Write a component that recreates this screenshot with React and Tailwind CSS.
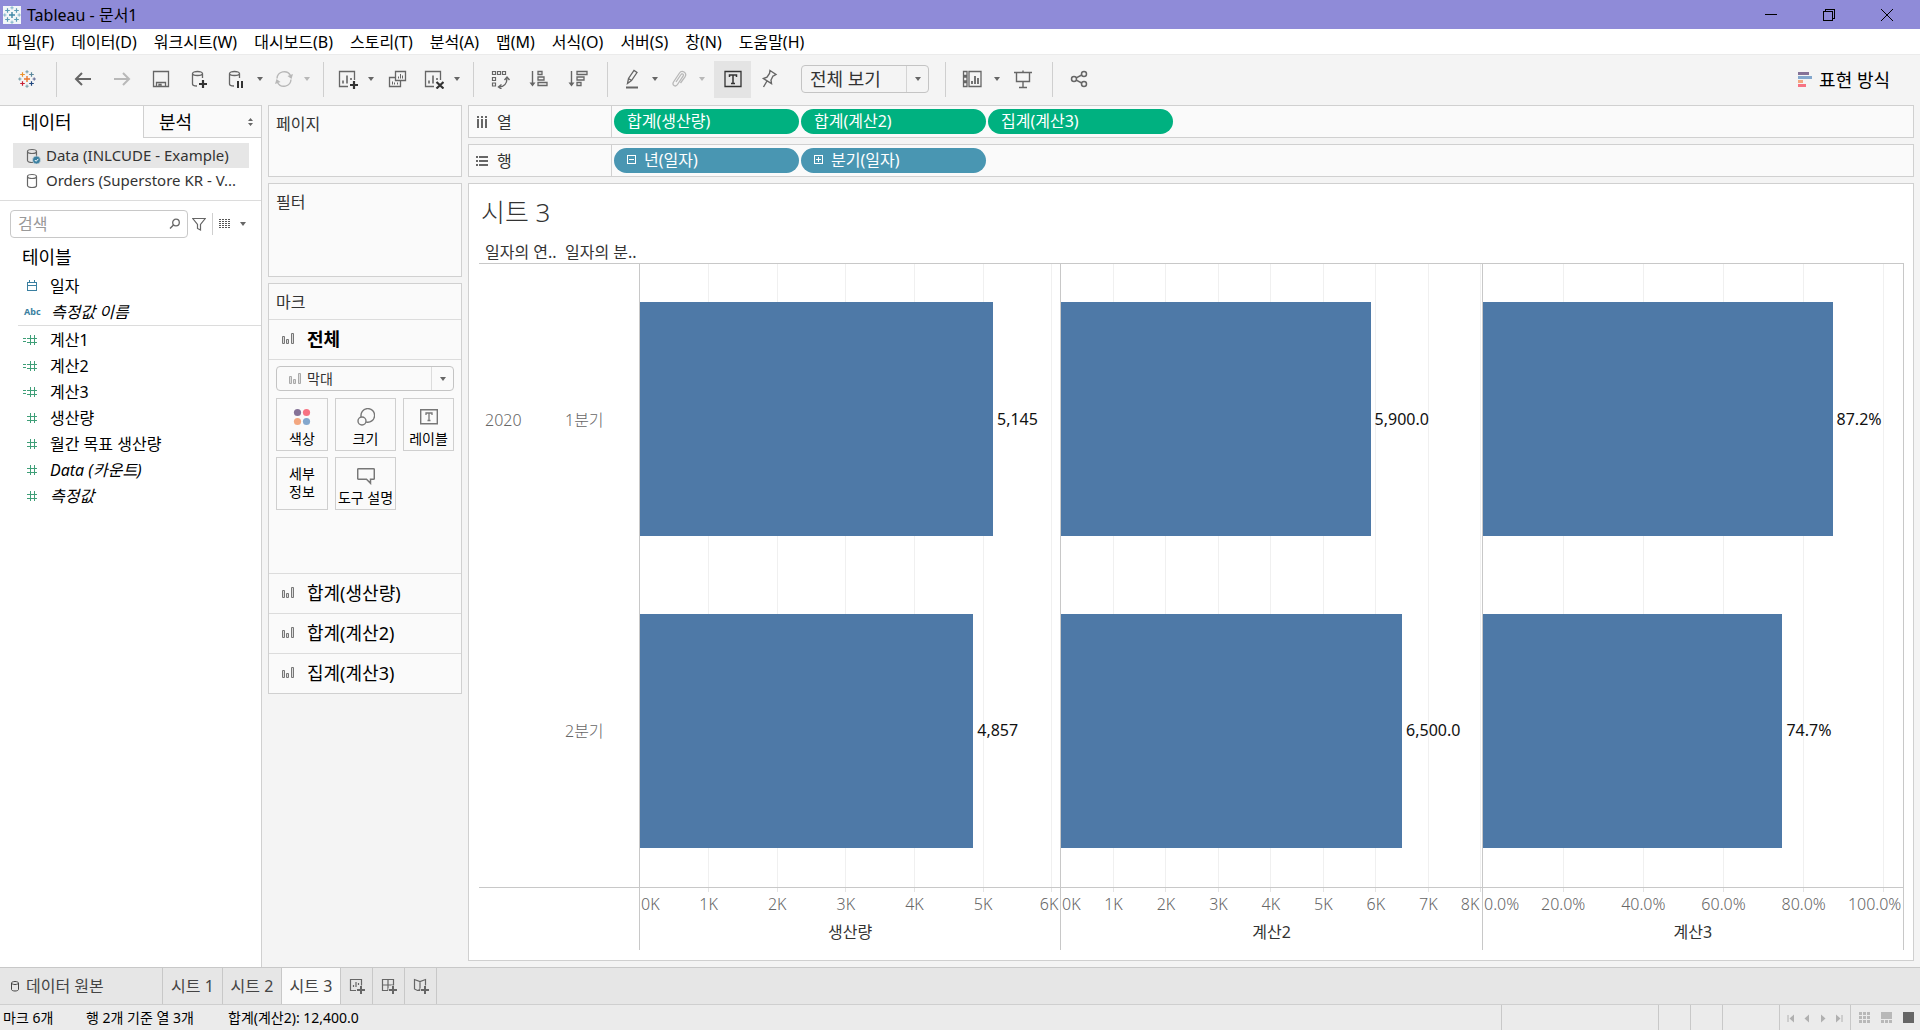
import React from 'react';

const menus = [
  '파일(F)',
  '데이터(D)',
  '워크시트(W)',
  '대시보드(B)',
  '스토리(T)',
  '분석(A)',
  '맵(M)',
  '서식(O)',
  '서버(S)',
  '창(N)',
  '도움말(H)'
];

const measures = [
  { name: '계산1', calc: true },
  { name: '계산2', calc: true },
  { name: '계산3', calc: true },
  { name: '생산량' },
  { name: '월간 목표 생산량' },
  { name: 'Data (카운트)', generated: true },
  { name: '측정값', generated: true }
];

const panes = [
  {
    title: '생산량',
    max: 6.126,
    ticks: [0, 1, 2, 3, 4, 5, 6].map(v => ({ value: v, label: `${v}K` })),
    bars: [
      { value: 5.145, label: '5,145' },
      { value: 4.857, label: '4,857' }
    ]
  },
  {
    title: '계산2',
    max: 8.01,
    ticks: [0, 1, 2, 3, 4, 5, 6, 7, 8].map(v => ({ value: v, label: `${v}K` })),
    bars: [
      { value: 5.9, label: '5,900.0' },
      { value: 6.5, label: '6,500.0' }
    ]
  },
  {
    title: '계산3',
    max: 104.85,
    ticks: [0, 20, 40, 60, 80, 100].map(v => ({ value: v, label: `${v}.0%` })),
    bars: [
      { value: 87.2, label: '87.2%' },
      { value: 74.7, label: '74.7%' }
    ]
  }
];

/* ---------- icons ---------- */

const Svg = ({ size = 20, className = '', children }) => (
  <svg
    width={size}
    height={size}
    viewBox={`0 0 ${size} ${size}`}
    fill="none"
    stroke="currentColor"
    className={`shrink-0 ${className}`}
    aria-hidden="true"
  >
    {children}
  </svg>
);

const Caret = ({ className = '' }) => (
  <svg width="6" height="4" viewBox="0 0 6 4" className={`shrink-0 ${className}`} aria-hidden="true">
    <path d="M0 0h6L3 4z" fill="currentColor" />
  </svg>
);

const Plus = ({ x, y, r, color, w = 1 }) => (
  <path d={`M${x - r} ${y}h${r * 2}M${x} ${y - r}v${r * 2}`} stroke={color} strokeWidth={w} />
);

const TableauMark = ({ mono }) => (
  <Svg size={18}>
    <Plus x={9} y={9} r={3} w={1.4} color={mono ? '#3f87a6' : '#e8762c'} />
    <Plus x={4.5} y={4.5} r={2.3} w={1.2} color={mono ? '#5b9bb5' : '#eb9129'} />
    <Plus x={13.5} y={4.5} r={2.3} w={1.2} color={mono ? '#5b9bb5' : '#59879b'} />
    <Plus x={4.5} y={13.5} r={2.3} w={1.2} color={mono ? '#5b9bb5' : '#c72035'} />
    <Plus x={13.5} y={13.5} r={2.3} w={1.2} color={mono ? '#5b9bb5' : '#1f457e'} />
    <Plus x={9} y={1.8} r={1.6} color={mono ? '#7fb2c8' : '#7099a6'} />
    <Plus x={9} y={16.2} r={1.6} color={mono ? '#7fb2c8' : '#7099a6'} />
    <Plus x={1.8} y={9} r={1.6} color={mono ? '#7fb2c8' : '#7099a6'} />
    <Plus x={16.2} y={9} r={1.6} color={mono ? '#7fb2c8' : '#5b6591'} />
  </Svg>
);

const BackIcon = () => (
  <Svg>
    <path d="M18 10H3M9 4l-6 6 6 6" strokeWidth="2" />
  </Svg>
);

const ForwardIcon = () => (
  <Svg>
    <path d="M2 10h15M11 4l6 6-6 6" strokeWidth="2" />
  </Svg>
);

const SaveIcon = () => (
  <Svg>
    <path d="M2.5 2.5h15v15h-15zM5.5 17.5v-4h9v4M8 17.5v-2h2v2" strokeWidth="1.3" />
  </Svg>
);

const Cylinder = () => (
  <path
    d="M12.5 9V4.5c0-1.1-2.2-2-5-2s-5 .9-5 2V15c0 1.1 2 2 4.5 2M2.5 4.5c0 1.1 2.2 2 5 2s5-.9 5-2"
    strokeWidth="1.3"
  />
);

const AddDataIcon = () => (
  <Svg>
    <Cylinder />
    <path d="M13 11v8M9 15h8" strokeWidth="2.2" stroke="#333" />
  </Svg>
);

const PauseDataIcon = () => (
  <Svg>
    <Cylinder />
    <path d="M11 12v7M15 12v7" strokeWidth="2" stroke="#333" />
  </Svg>
);

const RefreshIcon = () => (
  <Svg>
    <path d="M3 9.5a7.2 7.2 0 0 1 13.5-3M17 10.5a7.2 7.2 0 0 1-13.5 3" strokeWidth="1.4" />
    <path d="M19 5l-1.500 5L13.5 7zM1 15l1.500-5 4 3z" fill="currentColor" stroke="none" />
  </Svg>
);

const NewSheetIcon = () => (
  <Svg>
    <path d="M10 17.5H1.5v-15h15V11" strokeWidth="1.3" />
    <path d="M5 14.5v-3M9 14.5v-8M13 11V9" strokeWidth="1.6" />
    <path d="M16 12v8M12 16h8" strokeWidth="2.2" stroke="#333" />
  </Svg>
);

const DuplicateIcon = () => (
  <Svg>
    <path d="M8.5 2.5h10v9h-10zM8.5 8.5h-6v9h11v-6" strokeWidth="1.3" />
    <path d="M11.5 9.5V7.5M13.5 9.5V5M15.5 9.5V6.5M5.5 15.5v-3M7.5 15.5v-2M10.5 15.5v-2" />
  </Svg>
);

const ClearSheetIcon = () => (
  <Svg>
    <path d="M10 17.5H1.5v-15h15V11" strokeWidth="1.3" />
    <path d="M5 14.5v-3M9 14.5v-8M13 11V9" strokeWidth="1.6" />
    <path d="M12.5 13l7 6.5M19.5 13l-7 6.5" strokeWidth="2.2" stroke="#333" />
  </Svg>
);

const SwapIcon = () => (
  <Svg>
    <path d="M2.5 2.5h3v3h-3zM7.5 2.5h3v3h-3zM12.5 2.5h3v3h-3zM2.5 8.5h3v3h-3zM2.5 14h3v3h-3z" strokeWidth="1.2" />
    <path d="M9 18c5 0 8-3.500 8-9" strokeWidth="1.4" />
    <path d="M14.5 11l2.500-3 2.500 3M11.5 15.5l-3 2.500 3 2" strokeWidth="1.4" />
  </Svg>
);

const SortAscIcon = () => (
  <Svg>
    <path d="M3.5 2v13" strokeWidth="1.4" />
    <path d="M.5 13.5h6l-3 4z" fill="currentColor" stroke="none" />
    <path d="M9 2.5h4v3H9zM9 8h6v3H9zM9 13.5h9v3H9z" strokeWidth="1.3" />
  </Svg>
);

const SortDescIcon = () => (
  <Svg>
    <path d="M3.5 2v13" strokeWidth="1.4" />
    <path d="M.5 13.5h6l-3 4z" fill="currentColor" stroke="none" />
    <path d="M9 2.5h10v3H9zM9 8h7v3H9zM9 13.5h4v3H9z" strokeWidth="1.3" />
  </Svg>
);

const HighlightIcon = () => (
  <Svg>
    <path d="M5.5 14.5l1-5 5.5-8 3 2-5.5 8-4 3zM6.5 9.5l3 2" strokeWidth="1.3" />
    <path d="M4 18.5h12" strokeWidth="2" />
  </Svg>
);

const ClipIcon = () => (
  <Svg>
    <path
      d="M7 13l5-7.5c1-1.6 3.2-.2 2.2 1.4l-5.700 8.600c-2 3-6 .5-4-2.500l6-9c2.400-3.600 8-.2 5.500 3.800L11.5 14"
      strokeWidth="1.3"
    />
  </Svg>
);

const LabelIcon = () => (
  <Svg>
    <path d="M2 2.5h16v15H2z" strokeWidth="1.3" />
    <path d="M6.5 8V6h7v2M10 6v8.5M8 14.5h4" strokeWidth="1.5" />
  </Svg>
);

const PinIcon = () => (
  <Svg>
    <path d="M11 1.5l6 4-2 1.2-1 .3-2 4 .5 3.5-8-5L8 8.200 10.5 4.5zM8 12l-3.500 6" strokeWidth="1.4" />
  </Svg>
);

const CardsIcon = () => (
  <Svg size={22}>
    <path d="M2.5 3.5H6v4H2.5zM2.5 9H6v4H2.5zM2.5 14.5H6v4H2.5zM8 3.5h12v15H8z" strokeWidth="1.3" />
    <path d="M11 16v-3M14 16V8M17 16v-6" strokeWidth="1.8" />
  </Svg>
);

const PresentIcon = () => (
  <Svg>
    <path d="M1 3.5h18M3.5 4v8.5h13V4M10 1.5v2M10 12.5V18M6 18.5h8" strokeWidth="1.4" />
  </Svg>
);

const ShareIcon = () => (
  <Svg>
    <circle cx="5" cy="10" r="2.5" strokeWidth="1.5" />
    <circle cx="15" cy="5" r="2.5" strokeWidth="1.5" />
    <circle cx="15" cy="15" r="2.5" strokeWidth="1.5" />
    <path d="M7.2 8.8L12.7 6M7.2 11.2l5.5 2.8" strokeWidth="1.5" />
  </Svg>
);

const MarkBarIcon = ({ className = 'text-[#777]' }) => (
  <Svg size={14} className={className}>
    <path d="M1.5 4.5h2v7h-2zM5.5 7.5h2v4h-2zM10.5 1.5h2v10h-2z" fill="#ddd" />
  </Svg>
);

const DbIcon = ({ checked }) => (
  <Svg size={16} className="text-[#666]">
    <path
      d="M2.5 3.5c0-1.1 2-2 4.5-2s4.5.9 4.5 2v9c0 1.1-2 2-4.5 2s-4.500-.9-4.500-2zM2.5 3.5c0 1.1 2 2 4.5 2s4.500-.9 4.500-2"
      strokeWidth="1.2"
    />
    {checked && (
      <>
        <circle cx="11.5" cy="12" r="4" fill="#3a7fa0" stroke="#e6e6e6" strokeWidth=".6" />
        <path d="M9.8 12l1.3 1.3 2.2-2.4" stroke="#fff" />
      </>
    )}
  </Svg>
);

const HashIcon = ({ calc }) => (
  <Svg size={16} className="overflow-visible text-[#3f9f78]">
    <path d="M6.5 3v10M10.5 3v10M3 6.5h10M3 10.5h10" shapeRendering="crispEdges" />
    {calc && <path d="M-1 6.5h3M-1 9.5h3" shapeRendering="crispEdges" />}
  </Svg>
);

const AddTabIcon = ({ d }) => (
  <Svg size={18} className="text-[#666]">
    <path d={d} strokeWidth="1.2" />
    <path d="M13 8.5v9M8.5 13h9" strokeWidth="4" stroke="#e6e6e6" />
    <path d="M13 9v8M9 13h8" strokeWidth="2" />
  </Svg>
);

/* ---------- toolbar ---------- */

const Tool = ({ label, narrow, off, children }) => (
  <button
    type="button"
    aria-label={label}
    disabled={off}
    className={`flex h-9 shrink-0 items-center justify-center ${narrow ? 'w-[35px]' : 'w-[39px]'} ${off ? 'text-[#b8b8b8]' : 'text-[#666]'}`}
  >
    {children}
  </button>
);

const MoreButton = ({ label, off }) => (
  <button
    type="button"
    aria-label={label}
    disabled={off}
    className={`flex h-9 w-3 shrink-0 items-center justify-center ${off ? 'text-[#b8b8b8]' : 'text-[#666]'}`}
  >
    <Caret />
  </button>
);

const Separator = () => <span className="mr-1.5 ml-2.5 h-[35px] w-px shrink-0 bg-[#cfcfcf]" />;

const TitleBar = () => (
  <header className="flex h-[29px] shrink-0 items-center bg-[#8f8bd8] pl-[3px] text-black">
    <span className="flex size-[18px] items-center justify-center bg-[#f2f6f8]">
      <TableauMark mono />
    </span>
    <h1 className="ml-1.5 flex-1 text-base leading-none">Tableau - 문서1</h1>
    <button type="button" aria-label="최소화" className="flex h-full w-[58px] items-center justify-center">
      <Svg size={12}>
        <path d="M0 5.5h12" shapeRendering="crispEdges" />
      </Svg>
    </button>
    <button type="button" aria-label="이전 크기로" className="flex h-full w-[58px] items-center justify-center">
      <Svg size={12}>
        <path d="M.5 2.5h9v9h-9zM2.5 2.5v-2h9v9h-2" shapeRendering="crispEdges" />
      </Svg>
    </button>
    <button type="button" aria-label="닫기" className="mr-1 flex h-full w-[58px] items-center justify-center">
      <Svg size={12}>
        <path d="M0 0l12 12M12 0L0 12" />
      </Svg>
    </button>
  </header>
);

const Toolbar = () => (
  <div className="flex h-[51px] shrink-0 items-center border-t border-[#ebebeb] bg-[#f4f4f4] pb-0.5">
    <button type="button" aria-label="시작 페이지" className="flex h-9 w-[46px] shrink-0 items-center justify-center pl-2">
      <TableauMark />
    </button>
    <Separator />
    <Tool label="뒤로"><BackIcon /></Tool>
    <Tool label="앞으로" off><ForwardIcon /></Tool>
    <Tool label="저장"><SaveIcon /></Tool>
    <Tool label="새 데이터 원본"><AddDataIcon /></Tool>
    <Tool label="자동 업데이트 일시 중지" narrow><PauseDataIcon /></Tool>
    <MoreButton label="업데이트 옵션" />
    <Tool label="업데이트 실행" narrow off><RefreshIcon /></Tool>
    <MoreButton label="실행 옵션" off />
    <Separator />
    <Tool label="새 워크시트" narrow><NewSheetIcon /></Tool>
    <MoreButton label="새 워크시트 옵션" />
    <Tool label="복제"><DuplicateIcon /></Tool>
    <Tool label="시트 지우기" narrow><ClearSheetIcon /></Tool>
    <MoreButton label="지우기 옵션" />
    <Separator />
    <Tool label="행과 열 바꾸기"><SwapIcon /></Tool>
    <Tool label="오름차순 정렬"><SortAscIcon /></Tool>
    <Tool label="내림차순 정렬"><SortDescIcon /></Tool>
    <Separator />
    <Tool label="하이라이트" narrow><HighlightIcon /></Tool>
    <MoreButton label="하이라이트 옵션" />
    <Tool label="멤버 그룹화" narrow off><ClipIcon /></Tool>
    <MoreButton label="그룹 옵션" off />
    <button
      type="button"
      aria-label="마크 레이블 표시"
      aria-pressed="true"
      className="ml-1.5 flex h-[37px] w-[37px] shrink-0 items-center justify-center bg-[#e4e4e4] text-[#333]"
    >
      <LabelIcon />
    </button>
    <Tool label="축 고정" narrow><PinIcon /></Tool>
    <div className="relative mr-1.5 ml-[15px] w-32 shrink-0">
      <select
        aria-label="맞춤"
        className="h-7 w-full appearance-none rounded-sm border border-[#c4c4c4] bg-[#f4f4f4] pl-2 text-lg leading-none text-[#333]"
      >
        <option>전체 보기</option>
      </select>
      <span className="pointer-events-none absolute inset-y-px right-px flex w-[22px] items-center justify-center border-l border-[#d4d4d4] text-[#666]">
        <Caret />
      </span>
    </div>
    <Separator />
    <Tool label="카드 표시/숨기기"><CardsIcon /></Tool>
    <MoreButton label="카드 옵션" />
    <Tool label="프레젠테이션 모드"><PresentIcon /></Tool>
    <Separator />
    <Tool label="공유"><ShareIcon /></Tool>
    <button type="button" className="mr-[30px] ml-auto flex shrink-0 items-center gap-1.5 pt-0.5 text-lg text-black">
      <svg width="15" height="16" viewBox="0 0 15 16" aria-hidden="true">
        <path d="M0 0h11v3H0z" fill="#857297" />
        <path d="M0 4h14v3H0z" fill="#83a7cd" />
        <path d="M0 8h5v3H0z" fill="#f3a780" />
        <path d="M0 12h8v3H0z" fill="#f77383" />
      </svg>
      표현 방식
    </button>
  </div>
);

/* ---------- data pane ---------- */

const DataPane = () => (
  <aside className="flex w-[262px] shrink-0 flex-col border-t border-r border-[#d0d0d0] bg-white">
    <div className="flex h-8 text-lg leading-none text-black">
      <button type="button" className="w-[143px] pl-[22px] text-left">데이터</button>
      <button
        type="button"
        className="flex flex-1 items-center justify-between border-b border-l border-[#d0d0d0] bg-[#fafafa] pr-2 pl-[15px]"
      >
        분석
        <svg width="5" height="8" viewBox="0 0 5 8" fill="#666" aria-hidden="true">
          <path d="M2.5 0L5 3H0zM0 5h5L2.5 8z" />
        </svg>
      </button>
    </div>

    <ul className="mt-[5px] border-b border-[#dcdcdc] pb-[7px] text-[15px] text-[#333]">
      <li className="mr-3 ml-[13px] flex h-[25px] items-center gap-[5px] bg-[#e6e6e6] pl-3">
        <DbIcon checked />
        Data (INLCUDE - Example)
      </li>
      <li className="mr-3 ml-[13px] flex h-[25px] items-center gap-[5px] pl-3">
        <DbIcon />
        Orders (Superstore KR - V...
      </li>
    </ul>

    <div className="mt-[9px] ml-2.5 flex items-center text-[#666]">
      <label className="flex h-7 w-[178px] items-center rounded-sm border border-[#c8c8c8] pr-1.5 pl-[7px]">
        <input
          type="text"
          aria-label="검색"
          placeholder="검색"
          className="w-full min-w-0 bg-transparent text-base outline-none placeholder:text-[#999]"
        />
        <Svg size={12}>
          <circle cx="7" cy="4.5" r="3.3" strokeWidth="1.3" />
          <path d="M4.5 7L1 10.5" strokeWidth="1.5" />
        </Svg>
      </label>
      <button type="button" aria-label="필터" className="ml-1 flex h-7 items-center">
        <Svg size={14}>
          <path d="M.8 1.5h12.4L8.5 7.5V13l-3-1.500v-4z" strokeWidth="1.2" />
        </Svg>
      </button>
      <span className="mx-1.5 h-[22px] w-px bg-[#cfcfcf]" />
      <button type="button" aria-label="보기" className="flex h-7 items-center gap-[9px]">
        <svg width="12" height="10" viewBox="0 0 12 10" className="shrink-0" aria-hidden="true">
          <path
            d="M0 .5h12M0 2.5h12M0 4.5h12M0 6.5h12M0 8.5h12"
            stroke="#555"
            strokeDasharray="2 1"
          />
        </svg>
        <Caret />
      </button>
    </div>

    <h2 className="mt-1 mb-px flex h-[30px] items-center pl-[22px] text-lg text-black">테이블</h2>
    <ul className="text-base text-black">
      <li className="flex h-[26px] items-center pl-6">
        <Svg size={16} className="text-[#3a7fa0]">
          <path d="M3.5 4.5h9v8h-9zM3.5 7.5h9M5.5 2v2.5M10.5 2v2.5" shapeRendering="crispEdges" />
        </Svg>
        <span className="ml-2.5">일자</span>
      </li>
      <li className="flex h-[26px] items-center pl-6 italic">
        <span className="w-[27px] text-[9px] font-bold text-[#3a7fa0] not-italic">Abc</span>
        측정값 이름
      </li>
    </ul>
    <ul className="ml-[18px] border-t border-[#dcdcdc] pt-px text-base text-black">
      {measures.map(m => (
        <li key={m.name} className="flex h-[26px] items-center gap-2.5 pl-1.5">
          <HashIcon calc={m.calc} />
          <span className={m.generated ? 'italic' : ''}>{m.name}</span>
        </li>
      ))}
    </ul>
  </aside>
);

/* ---------- cards ---------- */

const MarkButton = ({ label, icon }) => (
  <button
    type="button"
    className="flex h-[53px] flex-col items-center justify-end gap-[5px] border border-[#cfcfcf] pb-[3px] text-sm leading-4 whitespace-nowrap text-black"
  >
    {icon}
    {label}
  </button>
);

const MarksRow = ({ children, bold }) => (
  <button
    type="button"
    className={`flex h-10 w-full items-center gap-3 border-t border-[#dcdcdc] pb-0.5 pl-3 text-lg text-black ${bold ? 'font-bold' : ''}`}
  >
    <MarkBarIcon />
    {children}
  </button>
);

const Cards = () => (
  <section className="flex w-[194px] shrink-0 flex-col gap-1.5 text-base text-[#333]">
    <div className="h-[72px] border border-[#d0d0d0] bg-[#fafafa] pt-1.5 pl-[7px]">페이지</div>
    <div className="h-[94px] border border-[#d0d0d0] bg-[#fafafa] pt-1.5 pl-[7px]">필터</div>
    <div className="flex h-[411px] flex-col border border-[#d0d0d0] bg-[#fafafa]">
      <h2 className="flex h-[35px] items-center pl-[7px]">마크</h2>
      <MarksRow bold>전체</MarksRow>
      <div className="flex-1 border-t border-[#dcdcdc] px-[7px] pt-1.5">
        <div className="relative flex items-center">
          <select
            aria-label="마크 유형"
            className="h-[25px] w-full appearance-none rounded-sm border border-[#c4c4c4] pl-[30px] text-sm leading-none"
          >
            <option>막대</option>
          </select>
          <span className="pointer-events-none absolute left-3">
            <MarkBarIcon className="text-[#aaa]" />
          </span>
          <span className="pointer-events-none absolute inset-y-px right-px flex w-[22px] items-center justify-center border-l border-[#dcdcdc] text-[#666]">
            <Caret />
          </span>
        </div>
        <div className="mt-[7px] grid grid-cols-[52px_61px_51px] gap-x-[7px] gap-y-1.5">
          <MarkButton
            label="색상"
            icon={
              <svg width="18" height="18" viewBox="0 0 18 18" aria-hidden="true">
                <circle cx="4.5" cy="4.5" r="3.6" fill="#857297" />
                <circle cx="13.5" cy="4.5" r="3.6" fill="#f77383" />
                <circle cx="4.5" cy="13.5" r="3.6" fill="#f3a780" />
                <circle cx="13.5" cy="13.5" r="3.6" fill="#83a7cd" />
              </svg>
            }
          />
          <MarkButton
            label="크기"
            icon={
              <Svg size={18} className="text-[#777]">
                <path d="M4.2 9a6.8 6.8 0 1 1 5 5" strokeWidth="1.4" />
                <circle cx="5" cy="13" r="4" strokeWidth="1.4" />
              </Svg>
            }
          />
          <MarkButton
            label="레이블"
            icon={
              <Svg size={18} className="text-[#777]">
                <path d="M.7 1.7h16.6v14H.7z" strokeWidth="1.4" />
                <path d="M6 7V5h6v2M9 5v7.5M7.5 12.5h3" strokeWidth="1.3" />
              </Svg>
            }
          />
          <button
            type="button"
            className="flex h-[53px] flex-col items-center justify-center border border-[#cfcfcf] pb-0.5 text-sm leading-[18px] text-black"
          >
            <span>세부</span>
            <span>정보</span>
          </button>
          <MarkButton
            label="도구 설명"
            icon={
              <Svg size={18} className="text-[#777]">
                <path
                  d="M1.5 1.7h15c.5 0 .8.3.8.8v9c0 .5-.3.8-.8.8h-3v4l-4-4h-8c-.5 0-.8-.3-.8-.8v-9c0-.5.3-.8.8-.8z"
                  strokeWidth="1.5"
                />
              </Svg>
            }
          />
        </div>
      </div>
      <MarksRow>합계(생산량)</MarksRow>
      <MarksRow>합계(계산2)</MarksRow>
      <MarksRow>집계(계산3)</MarksRow>
    </div>
  </section>
);

/* ---------- shelves ---------- */

const Shelf = ({ icon, label, children }) => (
  <div className="flex h-[33px] shrink-0 border border-[#d0d0d0] bg-[#fafafa]">
    <div className="flex w-[143px] shrink-0 items-center gap-2 border-r border-[#d0d0d0] pl-[7px] text-base text-[#333]">
      {icon}
      {label}
    </div>
    <div className="flex items-center gap-0.5 pl-0.5">{children}</div>
  </div>
);

const Pill = ({ color, expand, children }) => (
  <button
    type="button"
    className={`flex h-[25px] w-[185px] items-center gap-2 rounded-full pb-0.5 pl-[13px] text-base leading-none text-white ${color}`}
  >
    {expand && (
      <Svg size={9}>
        <path
          d={expand === 'plus' ? 'M.5.5h8v8h-8zM2 4.5h5M4.5 2v5' : 'M.5.5h8v8h-8zM2 4.5h5'}
          shapeRendering="crispEdges"
        />
      </Svg>
    )}
    {children}
  </button>
);

/* ---------- chart ---------- */

const Pane = ({ pane, last }) => {
  const pct = value => `${(value / pane.max) * 100}%`;
  const lastTick = pane.ticks.length - 1;

  return (
    <div className={`flex min-w-0 flex-1 flex-col border-l border-[#c8c8c8] ${last ? 'border-r' : ''}`}>
      <svg className="min-h-0 w-full flex-1 overflow-visible">
        {pane.ticks.slice(1).map(t => (
          <line
            key={t.label}
            x1={pct(t.value)}
            x2={pct(t.value)}
            y1="0"
            y2="100%"
            stroke="#f0f0f0"
            shapeRendering="crispEdges"
          />
        ))}
        {pane.bars.map((bar, i) => (
          <g key={bar.label}>
            <rect
              x="0"
              y={i === 0 ? '6.1%' : '56.2%'}
              width={pct(bar.value)}
              height="37.6%"
              fill="#4e79a7"
              shapeRendering="crispEdges"
            />
            <text x={pct(bar.value)} y={i === 0 ? '25%' : '75%'} dx="4" dy="5" className="fill-[#111] text-base">
              {bar.label}
            </text>
          </g>
        ))}
      </svg>
      <svg className="h-8 w-full shrink-0 border-t border-[#c8c8c8]">
        {pane.ticks.slice(1).map(t => (
          <line
            key={t.label}
            x1={pct(t.value)}
            x2={pct(t.value)}
            y1="0"
            y2="4"
            stroke="#e4e4e4"
            shapeRendering="crispEdges"
          />
        ))}
        {pane.ticks.map((t, i) => (
          <text
            key={t.label}
            x={i === 0 ? 1 : i === lastTick ? '100%' : pct(t.value)}
            dx={i === lastTick ? -2 : 0}
            y="22"
            textAnchor={i === 0 ? 'start' : i === lastTick ? 'end' : 'middle'}
            className="fill-[#666] text-base font-light"
          >
            {t.label}
          </text>
        ))}
      </svg>
      <div className="flex h-[31px] shrink-0 justify-center text-base leading-[26px] text-[#333]">{pane.title}</div>
    </div>
  );
};

const Sheet = () => (
  <main className="flex min-h-0 flex-1 flex-col border border-[#d0d0d0] bg-white pr-[9px] pb-2.5 pl-2.5">
    <h2 className="flex h-[55px] shrink-0 items-center pt-0.5 pl-0.5 text-[26px] font-light text-[#333]">시트 3</h2>
    <div className="flex h-6 shrink-0 items-center pt-0.5 pl-1.5 text-base text-[#333]">
      <span className="w-20 shrink-0">일자의 연..</span>
      <span className="w-20 shrink-0">일자의 분..</span>
    </div>
    <div className="flex min-h-0 flex-1 border-t border-[#c8c8c8]">
      <div className="flex w-40 shrink-0 flex-col text-base font-light text-[#666]">
        <div className="grid flex-1 grid-cols-[80px_74px] grid-rows-2 items-center pl-1.5">
          <span>2020</span>
          <span>1분기</span>
          <span className="col-start-2">2분기</span>
        </div>
        <div className="h-[63px] shrink-0 border-t border-[#c8c8c8]" />
      </div>
      {panes.map((pane, i) => (
        <Pane key={pane.title} pane={pane} last={i === panes.length - 1} />
      ))}
    </div>
  </main>
);

/* ---------- bottom bars ---------- */

const SheetTabs = () => (
  <nav className="flex h-[37px] shrink-0 border-t border-[#c8c8c8] bg-[#e6e6e6] text-base text-[#444]">
    <button type="button" className="flex w-[163px] items-center gap-1 border-r border-[#c8c8c8] pl-2.5">
      <Svg size={12}>
        <path d="M1.5 3c0-.8 1.6-1.500 3.500-1.500S8.5 2.2 8.5 3v6.5c0 .8-1.600 1.500-3.500 1.500s-3.500-.7-3.500-1.500zM1.5 3c0 .8 1.6 1.5 3.5 1.5S8.5 3.8 8.5 3" />
      </Svg>
      데이터 원본
    </button>
    <button type="button" className="w-[60px] border-r border-[#c8c8c8]">시트 1</button>
    <button type="button" className="w-[59px] border-r border-[#c8c8c8]">시트 2</button>
    <button type="button" className="w-[59px] border-r border-[#c8c8c8] bg-[#fafafa]">시트 3</button>
    <button type="button" aria-label="새 워크시트" className="flex w-8 items-center justify-center border-r border-[#c8c8c8]">
      <AddTabIcon d="M8 13.5H2.5v-11h11V9M5.5 10V8M8 10V5M10.5 8V6" />
    </button>
    <button type="button" aria-label="새 대시보드" className="flex w-8 items-center justify-center border-r border-[#c8c8c8]">
      <AddTabIcon d="M8 13.5H2.5v-11h11V9M2.5 8h11M8 2.5v11" />
    </button>
    <button type="button" aria-label="새 스토리" className="flex w-8 items-center justify-center border-r border-[#c8c8c8]">
      <AddTabIcon d="M8 13.5H5.5l-3-1.500V2.5L8 4.5l5.500-2V9M8 4.5v9M5.5 13.5l2.500-1" />
    </button>
  </nav>
);

const StatusBar = () => (
  <footer className="flex h-[26px] shrink-0 items-center border-t border-[#cfcfcf] bg-[#ebebeb] text-sm text-black">
    <span className="w-[82px] shrink-0 pl-[3px]">마크 6개</span>
    <span className="w-[146px] shrink-0 pl-1">행 2개 기준 열 3개</span>
    <span className="shrink-0">합계(계산2): 12,400.0</span>
    <div className="ml-auto flex h-full shrink-0">
      <span className="w-[157px] border-l border-[#c8c8c8]" />
      <span className="w-8 border-l border-[#c8c8c8]" />
      <span className="w-8 border-l border-[#c8c8c8]" />
      <span className="w-[57px] border-l border-[#c8c8c8]" />
      <div className="flex w-[71px] items-center justify-center gap-1.5 border-l border-[#c8c8c8] text-[#b0b0b0]">
        <button type="button" aria-label="첫 시트">
          <Svg size={10}>
            <path d="M2 2v7" />
            <path d="M8 1.5v8l-4.500-4z" fill="currentColor" stroke="none" />
          </Svg>
        </button>
        <button type="button" aria-label="이전 시트">
          <Svg size={10}>
            <path d="M7 1.5v8l-4.500-4z" fill="currentColor" stroke="none" />
          </Svg>
        </button>
        <button type="button" aria-label="다음 시트">
          <Svg size={10}>
            <path d="M3 1.5v8l4.500-4z" fill="currentColor" stroke="none" />
          </Svg>
        </button>
        <button type="button" aria-label="마지막 시트">
          <Svg size={10}>
            <path d="M8 2v7" />
            <path d="M2 1.5v8l4.500-4z" fill="currentColor" stroke="none" />
          </Svg>
        </button>
      </div>
      <div className="flex w-[70px] items-center justify-between border-l border-[#c8c8c8] pr-1.5 pl-2 text-[#b8b8b8]">
        <button type="button" aria-label="시트 정렬기 표시">
          <svg width="11" height="11" viewBox="0 0 11 11" fill="currentColor" aria-hidden="true">
            <path d="M0 0h3v3H0zM4 0h3v3H4zM8 0h3v3H8zM0 4h3v3H0zM4 4h3v3H4zM8 4h3v3H8zM0 8h3v3H0zM4 8h3v3H4zM8 8h3v3H8z" />
          </svg>
        </button>
        <button type="button" aria-label="필름스트립 표시">
          <svg width="11" height="11" viewBox="0 0 11 11" fill="currentColor" aria-hidden="true">
            <path d="M0 0h11v7H0zM0 8h3v3H0zM4 8h3v3H4zM8 8h3v3H8z" />
          </svg>
        </button>
        <button type="button" aria-label="시트 탭 표시">
          <svg width="11" height="11" viewBox="0 0 11 11" aria-hidden="true">
            <path d="M0 0h11v11H0z" fill="#666" />
          </svg>
        </button>
      </div>
    </div>
  </footer>
);

const App = () => (
  <div className="flex h-screen flex-col overflow-hidden bg-[#f4f4f4] font-['Noto_Sans','Noto_Sans_CJK_KR',sans-serif] font-[390]">
    <TitleBar />
    <nav className="flex h-[25px] shrink-0 items-center gap-[17px] bg-white pl-[7px] text-base leading-none text-black">
      {menus.map(menu => (
        <button key={menu} type="button" className="whitespace-nowrap">
          {menu}
        </button>
      ))}
    </nav>
    <Toolbar />
    <div className="flex min-h-0 flex-1">
      <DataPane />
      <div className="flex min-w-0 flex-1 gap-1.5 pr-1.5 pb-1.5 pl-1.5">
        <Cards />
        <div className="flex min-w-0 flex-1 flex-col gap-1.5">
          <Shelf
            label="열"
            icon={
              <svg width="13" height="12" viewBox="0 0 13 12" fill="#666" aria-hidden="true">
                <path d="M1 0h2v2H1zM5 0h2v2H5zM9 0h2v2H9zM1 3h2v9H1zM5 3h2v9H5zM9 3h2v9H9z" />
              </svg>
            }
          >
            <Pill color="bg-[#00b180]">합계(생산량)</Pill>
            <Pill color="bg-[#00b180]">합계(계산2)</Pill>
            <Pill color="bg-[#00b180]">집계(계산3)</Pill>
          </Shelf>
          <Shelf
            label="행"
            icon={
              <svg width="13" height="12" viewBox="0 0 13 12" fill="#666" aria-hidden="true">
                <path d="M0 1h2v2H0zM0 5h2v2H0zM0 9h2v2H0zM3 1h9v2H3zM3 5h9v2H3zM3 9h9v2H3z" />
              </svg>
            }
          >
            <Pill color="bg-[#4996b2]" expand="minus">년(일자)</Pill>
            <Pill color="bg-[#4996b2]" expand="plus">분기(일자)</Pill>
          </Shelf>
          <Sheet />
        </div>
      </div>
    </div>
    <SheetTabs />
    <StatusBar />
  </div>
);

export default App;
